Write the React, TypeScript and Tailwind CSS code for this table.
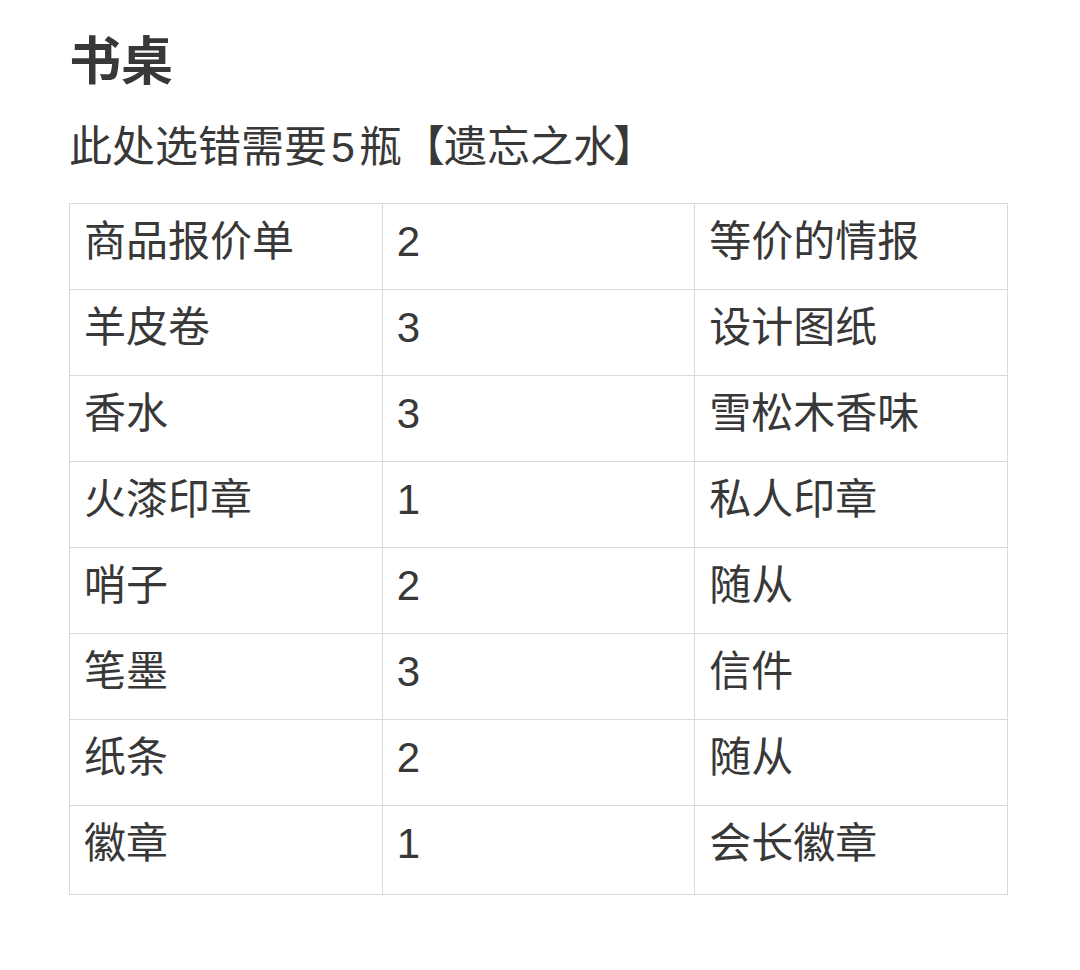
const rows: [string, string, string][] = [
  ["商品报价单", "2", "等价的情报"],
  ["羊皮卷", "3", "设计图纸"],
  ["香水", "3", "雪松木香味"],
  ["火漆印章", "1", "私人印章"],
  ["哨子", "2", "随从"],
  ["笔墨", "3", "信件"],
  ["纸条", "2", "随从"],
  ["徽章", "1", "会长徽章"],
];

export default function App() {
  return (
    <div
      className="min-h-[970px] w-[1080px] bg-white pl-[69px] pt-[36px] text-[#383838]"
      style={{ fontFamily: '"Liberation Sans", "Noto Sans CJK SC", sans-serif' }}
    >
      <h1 className="text-[52px] font-bold leading-[52px]">书桌</h1>
      <p className="mt-[38px] text-[43px] leading-[43px]">
        此处选错需要<span className="mx-[4px]">5</span>瓶<span className="tracking-[-1px]">【</span>遗忘之<span className="tracking-[-3px]">水</span>】
      </p>
      <table className="mt-[34px] w-[939px] table-fixed border-collapse">
        <tbody>
          {rows.map((r, i) => (
            <tr key={i} className={i === rows.length - 1 ? "h-[89px]" : "h-[86px]"}>
              {r.map((c, j) => (
                <td
                  key={j}
                  className="border border-[#d9d9d9] px-[14px] pt-[17px] align-top text-[42px] leading-[42px]"
                >
                  {c}
                </td>
              ))}
            </tr>
          ))}
        </tbody>
      </table>
    </div>
  );
}
